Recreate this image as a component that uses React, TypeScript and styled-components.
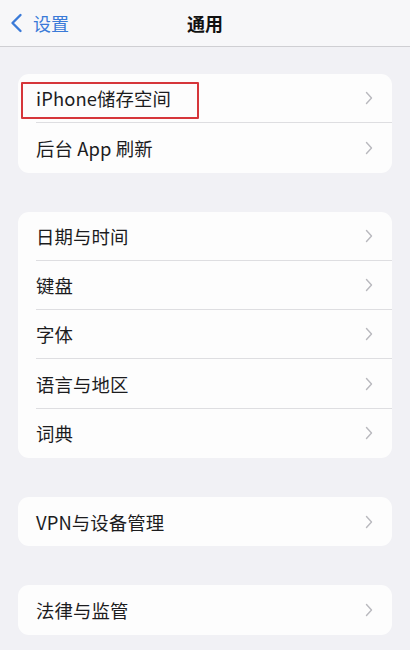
import React from "react";
import styled, { createGlobalStyle } from "styled-components";

const Global = createGlobalStyle`
  html, body { margin: 0; padding: 0; }
  body {
    background: #f1f1f5;
    font-family: "Noto Sans CJK SC", "Noto Sans", sans-serif;
    -webkit-font-smoothing: antialiased;
  }
`;

const Page = styled.div`
  width: 410px;
  height: 650px;
  background: #f1f1f5;
  overflow: hidden;
`;

const NavBar = styled.div`
  height: 46px;
  display: grid;
  grid-template-columns: 1fr auto 1fr;
  align-items: center;
  background: #f7f7f9;
  border-bottom: 1px solid #cfcfd3;
`;

const BackButton = styled.div`
  display: flex;
  align-items: center;
  gap: 10px;
  padding-left: 10px;
  color: #3a7ad8;
  font-size: 18px;
`;

const Title = styled.div`
  font-size: 18px;
  font-weight: 700;
  color: #111;
`;

const Content = styled.div`
  display: flex;
  flex-direction: column;
  gap: 39px;
  padding: 27px 18px 0 18px;
`;

const Group = styled.div`
  background: #fdfdfd;
  border-radius: 11px;
  overflow: hidden;
`;

const Row = styled.div`
  position: relative;
  display: flex;
  padding-left: 18px;
`;

const RowInner = styled.div<{ $last: boolean }>`
  flex: 1;
  height: 49.3px;
  box-sizing: border-box;
  display: flex;
  align-items: center;
  justify-content: space-between;
  padding-right: 19px;
  border-bottom: ${(p) => (p.$last ? "none" : "1px solid #dedee1")};
`;

const Label = styled.span`
  font-size: 18.4px;
  color: #1c1c1e;
  letter-spacing: 0.1px;
`;

const Highlight = styled.div`
  position: absolute;
  left: 3px;
  top: 8px;
  width: 178px;
  height: 37px;
  box-sizing: border-box;
  border: 2.5px solid #d6363a;
  border-radius: 1px;
  pointer-events: none;
`;

const Chevron = () => (
  <svg width="8" height="14" viewBox="0 0 8 14">
    <polyline
      points="1.5,1.5 6.5,7 1.5,12.5"
      fill="none"
      stroke="#b9b9be"
      strokeWidth="1.4"
      strokeLinecap="round"
      strokeLinejoin="round"
    />
  </svg>
);

const BackIcon = () => (
  <svg width="13" height="20" viewBox="0 0 13 20">
    <polyline
      points="10.5,2 2.5,10 10.5,18"
      fill="none"
      stroke="#3a7ad8"
      strokeWidth="2.4"
      strokeLinecap="round"
      strokeLinejoin="round"
    />
  </svg>
);

const groups: { label: string; highlight?: boolean }[][] = [
  [{ label: "iPhone储存空间", highlight: true }, { label: "后台 App 刷新" }],
  [
    { label: "日期与时间" },
    { label: "键盘" },
    { label: "字体" },
    { label: "语言与地区" },
    { label: "词典" },
  ],
  [{ label: "VPN与设备管理" }],
  [{ label: "法律与监管" }],
];

export default function App() {
  return (
    <Page>
      <Global />
      <NavBar>
        <BackButton>
          <BackIcon />
          <span>设置</span>
        </BackButton>
        <Title>通用</Title>
        <div />
      </NavBar>
      <Content>
        {groups.map((g, gi) => (
          <Group key={gi}>
            {g.map((item, i) => (
              <Row key={item.label}>
                {item.highlight && <Highlight />}
                <RowInner $last={i === g.length - 1}>
                  <Label>{item.label}</Label>
                  <Chevron />
                </RowInner>
              </Row>
            ))}
          </Group>
        ))}
      </Content>
    </Page>
  );
}
